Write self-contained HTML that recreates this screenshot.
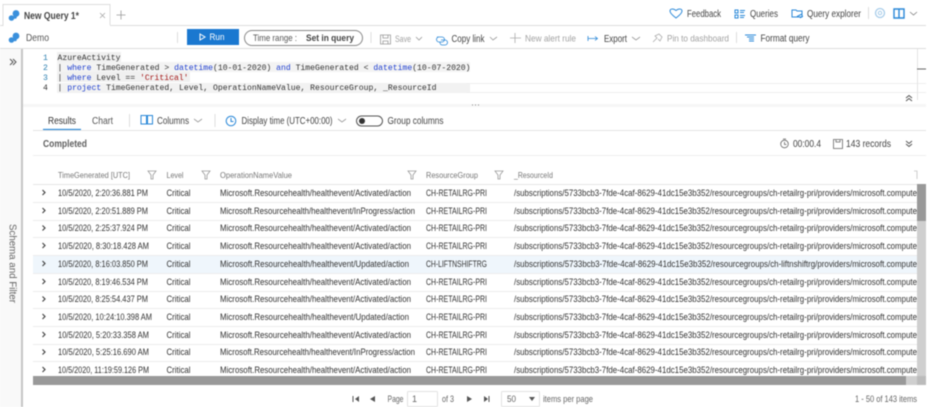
<!DOCTYPE html>
<html><head><meta charset="utf-8"><style>
html,body{margin:0;padding:0;background:#fff;overflow:hidden}
svg{display:block;filter:blur(.45px)}
text{font-family:"Liberation Sans",sans-serif;white-space:pre}
.m{font-family:"Liberation Mono",monospace;font-size:8.1px;fill:#333}
.b{fill:#1f3fd0}.n{fill:#2b7fb0}
.t{font-size:8.9px;fill:#333}
.h{font-size:8.6px;fill:#777}
.u{font-size:9.7px;fill:#444}
.g{font-size:9.400px;fill:#a2a2a2}
.i{fill:none;stroke:#2a88d8;stroke-width:1}
.f{fill:none;stroke:#999;stroke-width:.8}
.c{fill:none;stroke:#555;stroke-width:1}
</style></head><body>
<svg width="936" height="407" viewBox="0 0 936 407" xmlns="http://www.w3.org/2000/svg">
<rect width="936" height="407" fill="#fff"/>
<!-- top tab -->
<path d="M0 25.500H3V4.500H110V25.500H926" fill="none" stroke="#ddd"/>
<path d="M4 25.500H110" stroke="#fff" stroke-width="1"/>
<g fill="#3a90dc"><circle cx="11.500" cy="18" r="2.800"/><circle cx="16" cy="13.500" r="3.400"/><circle cx="15" cy="17" r="1.800"/></g>
<text x="24" y="19" font-size="10" font-weight="bold" fill="#444" textLength="55" lengthAdjust="spacingAndGlyphs">New Query 1*</text>
<path d="M100 13L105 18M105 13L100 18" stroke="#aaa" stroke-width=".8"/>
<path d="M121 10.500V19.500M116.500 15H125.500" stroke="#999" stroke-width=".8"/>
<!-- top right -->
<path d="M676 18C672 15 670 13 670 11C670 9 673 8 676 10.500C679 8 682 9 682 11C682 13 680 15 676 18Z" class="i"/>
<text x="687" y="17" class="u" textLength="34" lengthAdjust="spacingAndGlyphs">Feedback</text>
<path d="M735 10h3v3h-3zM735 15h3v3h-3z" class="i"/><path d="M740 10.500h5M740 12.500h4M740 15.500h5M740 17.500h4" stroke="#2a88d8"/>
<text x="750" y="17" class="u" textLength="28" lengthAdjust="spacingAndGlyphs">Queries</text>
<path d="M792 17V10H796L797 11H802V17H792Z" class="i"/><path d="M797 16.500L802 14M800 18L803 16" stroke="#2a88d8"/>
<text x="807" y="17" class="u" textLength="54" lengthAdjust="spacingAndGlyphs">Query explorer</text>
<path d="M868.500 7V19" stroke="#ddd"/>
<circle cx="880" cy="13" r="4.500" fill="none" stroke="#a8cdea" stroke-width="1.300"/><circle cx="880" cy="13" r="1.700" fill="none" stroke="#a8cdea"/>
<path d="M894 9H904V18H894ZM899 9V18" fill="none" stroke="#2a88d8" stroke-width="1.400"/>
<path d="M910 12L913.500 15L917 12" fill="none" stroke="#777" stroke-width=".7"/>
<!-- toolbar -->
<g fill="#3a90dc"><circle cx="11.500" cy="40" r="2.800"/><circle cx="16" cy="36" r="3.400"/><circle cx="15" cy="39.500" r="1.800"/></g>
<text x="26" y="41" font-size="9.800" fill="#555" textLength="23" lengthAdjust="spacingAndGlyphs">Demo</text>
<path d="M177.500 32V43" stroke="#ddd"/>
<rect x="187" y="29" width="52" height="16" fill="#1a78d0"/>
<path d="M200 34L205 37L200 40Z" fill="none" stroke="#fff"/>
<text x="209.500" y="40" font-size="9.500" fill="#fff" textLength="15" lengthAdjust="spacingAndGlyphs">Run</text>
<rect x="244.500" y="30.500" width="118" height="15" rx="7.500" fill="#fff" stroke="#888"/>
<text x="253" y="41" font-size="9.500" fill="#555" textLength="44" lengthAdjust="spacingAndGlyphs">Time range :</text>
<text x="306" y="41" font-size="9.500" font-weight="bold" fill="#444" textLength="48" lengthAdjust="spacingAndGlyphs">Set in query</text>
<path d="M371 32V43" stroke="#ddd"/>
<path d="M380.500 35H390.500V44H380.500ZM383 35V38H388V35M383 44V41H388V44" fill="none" stroke="#999" stroke-width=".8"/>
<text x="395" y="42" class="g" textLength="16" lengthAdjust="spacingAndGlyphs">Save</text>
<path d="M416 37L419 40L422 37" class="f"/>
<path d="M437 37h5a2.500 2.500 0 0 1 0 5h-3a2.500 2.500 0 0 1 0-5M441 40h4a2.500 2.500 0 0 1 0 5h-3a2.500 2.500 0 0 1-2-3" fill="none" stroke="#2a88d8" stroke-width=".8"/>
<text x="451.500" y="42" class="u" textLength="33" lengthAdjust="spacingAndGlyphs">Copy link</text>
<path d="M490 37L493 40L497 37" class="f"/>
<path d="M515 33V43M510 38H521" stroke="#aaa" stroke-width=".8"/>
<text x="525" y="41.500" class="g" textLength="51" lengthAdjust="spacingAndGlyphs">New alert rule</text>
<path d="M588 36V41M588 38.500H597M595 36.500L597.500 38.500L595 40.500" fill="none" stroke="#2a88d8" stroke-width=".8"/>
<text x="604" y="42" class="u" textLength="23" lengthAdjust="spacingAndGlyphs">Export</text>
<path d="M632 37L636 40L640 37" class="f"/>
<path d="M653 42L657 38L655 36L659 34L662 37L660 41L658 39" fill="none" stroke="#aaa" stroke-width=".8"/>
<text x="667" y="41.500" class="g" textLength="62" lengthAdjust="spacingAndGlyphs">Pin to dashboard</text>
<path d="M736.500 32V43" stroke="#ddd"/>
<path d="M745 35H756M747 37H754M749 39H754M749 41H754" stroke="#2a88d8" stroke-width="1"/>
<text x="760.500" y="41.500" class="u" textLength="49" lengthAdjust="spacingAndGlyphs">Format query</text>
<path d="M0 48.500H926" stroke="#ddd"/>
<!-- left sidebar -->
<rect x="0" y="49" width="21" height="358" fill="#f9f9f9"/>
<rect x="21" y="49" width="2" height="358" fill="#c6c6c6"/>
<path d="M10 59L13 62L10 65M13 59L16 62L13 65" fill="none" stroke="#555"/>
<text transform="translate(9.500,224) rotate(90)" font-size="10.500" fill="#666" textLength="79" lengthAdjust="spacingAndGlyphs">Schema and Filter</text>
<!-- editor -->
<rect x="57" y="52" width="64" height="10" fill="#f0f0f0"/>
<rect x="57" y="62" width="413" height="10" fill="#f3f3f3"/>
<rect x="57" y="72" width="133" height="10" fill="#f0f0f0"/>
<rect x="57" y="83" width="413" height="10" fill="#f2f2f2"/>
<path d="M466 83.500H926M466 92.500H926" stroke="#eee"/>
<path d="M917.500 49V100" stroke="#e4e4e4"/>
<path d="M917 69H926" stroke="#666"/>
<text class="m n" x="43" y="60">1</text><text class="m n" x="43" y="70">2</text><text class="m n" x="43" y="80">3</text><text class="m" x="43" y="90">4</text>
<text class="m" x="57.500" y="60" textLength="63">AzureActivity</text>
<text class="m" x="57.500" y="70" textLength="413" xml:space="preserve">| <tspan class="b">where</tspan> TimeGenerated &gt; <tspan class="b">datetime</tspan>(10-01-2020) <tspan class="b">and</tspan> TimeGenerated &lt; <tspan class="b">datetime</tspan>(10-07-2020)</text>
<text class="m" x="57.500" y="80" textLength="131" xml:space="preserve">| <tspan class="b">where</tspan> Level == <tspan fill="#a31515">'Critical'</tspan></text>
<text class="m" x="57.500" y="90" textLength="379" xml:space="preserve">| <tspan class="b">project</tspan> TimeGenerated, Level, OperationNameValue, ResourceGroup, _ResourceId</text>
<path d="M906 98L909 95.500L912 98M906 101L909 98.500L912 101" fill="none" stroke="#555"/>
<rect x="23" y="104" width="903" height="3" fill="#f6f6f6"/>
<path d="M472 105h1M475 105h1M478 105h1" stroke="#888"/>
<!-- results tabs -->
<text x="48" y="124" font-size="9.800" fill="#333" textLength="28" lengthAdjust="spacingAndGlyphs">Results</text>
<path d="M43 129.500H81" stroke="#2a88d8" stroke-width="1.300"/>
<text x="92" y="124" font-size="9.800" fill="#555" textLength="21" lengthAdjust="spacingAndGlyphs">Chart</text>
<path d="M129.500 114V127" stroke="#ddd"/>
<path d="M141 115.500H146.500V124H141ZM147.500 115.500H152.500V124H147.500Z" class="i"/>
<text x="157" y="124" class="u" textLength="32" lengthAdjust="spacingAndGlyphs">Columns</text>
<path d="M194 119L198 122L202 119" class="f"/>
<path d="M215 114V127" stroke="#ddd"/>
<circle cx="231" cy="121" r="4.800" class="i"/><path d="M231 118V121.500H233.500" class="i"/>
<text x="241.500" y="124" class="u" textLength="91" lengthAdjust="spacingAndGlyphs">Display time (UTC+00:00)</text>
<path d="M338 119L342 122L346 119" class="f"/>
<rect x="356.500" y="116" width="26" height="10" rx="5" fill="#fff" stroke="#555"/>
<circle cx="362" cy="121" r="3" fill="#333"/>
<text x="387.500" y="124" class="u" textLength="56" lengthAdjust="spacingAndGlyphs">Group columns</text>
<path d="M33 130.500H926" stroke="#e4e4e4"/>
<text x="43" y="147" font-size="10" fill="#444" font-weight="bold" textLength="44" lengthAdjust="spacingAndGlyphs" opacity=".85">Completed</text>
<circle cx="784.500" cy="144" r="3.800" fill="none" stroke="#666" stroke-width=".8"/><path d="M784.500 142V144.500H786.500M783 139H786" fill="none" stroke="#666" stroke-width=".8"/>
<text x="793" y="147" class="u" textLength="28" lengthAdjust="spacingAndGlyphs">00:00.4</text>
<path d="M833.500 139.500H842.500V148.500H833.500ZM836 140V142H840V140" fill="none" stroke="#666" stroke-width=".8"/>
<text x="846" y="147" class="u" textLength="45" lengthAdjust="spacingAndGlyphs">143 records</text>
<path d="M906 141L909 143.500L912 141M906 144L909 146.500L912 144" fill="none" stroke="#555"/>
<path d="M33 155.500H926" stroke="#eee"/>
<!-- header -->
<text x="58" y="178" class="h" textLength="72" lengthAdjust="spacingAndGlyphs">TimeGenerated [UTC]</text>
<text x="166.500" y="178" class="h" textLength="17" lengthAdjust="spacingAndGlyphs">Level</text>
<text x="220" y="178" class="h" textLength="72" lengthAdjust="spacingAndGlyphs">OperationNameValue</text>
<text x="426" y="178" class="h" textLength="52" lengthAdjust="spacingAndGlyphs">ResourceGroup</text>
<text x="514" y="178" class="h" textLength="39" lengthAdjust="spacingAndGlyphs">_ResourceId</text>
<path d="M148 171H156L153 175V179H151V175Z" class="f"/>
<path d="M202 171H210L207 175V179H205V175Z" class="f"/>
<path d="M408 171H416L413 175V179H411V175Z" class="f"/>
<path d="M495 171H503L500 175V179H498V175Z" class="f"/>
<path d="M914 171H917V179" class="f" opacity=".6"/>
<path d="M33 184.500H917" stroke="#e6e6e6"/>
<!-- selected row -->
<rect x="33" y="255" width="884" height="18" fill="#eff6fc"/>
<!-- row lines -->
<path d="M33 202.500H917M33 220.500H917M33 237.500H917M33 255.500H917M33 273.500H917M33 291.500H917M33 308.500H917M33 326.500H917M33 344.500H917M33 361.500H917" stroke="#ececec"/>
<!-- chevrons -->
<g fill="none" stroke="#444" stroke-width="1.200">
<path d="M42.500 190L45 192.500L42.500 195"/><path d="M42.500 208L45 210.500L42.500 213"/><path d="M42.500 225.500L45 228L42.500 230.500"/><path d="M42.500 243L45 245.500L42.500 248"/><path d="M42.500 261L45 263.500L42.500 266"/><path d="M42.500 279L45 281.500L42.500 284"/><path d="M42.500 296.500L45 299L42.500 301.500"/><path d="M42.500 314L45 316.500L42.500 319"/><path d="M42.500 332L45 334.500L42.500 337"/><path d="M42.500 349.500L45 352L42.500 354.500"/><path d="M42.500 367L45 369.500L42.500 372"/>
</g>
<!-- rows -->
<g>
<text class="t" x="58" y="196" textLength="90" lengthAdjust="spacingAndGlyphs">10/5/2020, 2:20:36.881 PM</text>
<text class="t" x="166.500" y="196" textLength="24" lengthAdjust="spacingAndGlyphs">Critical</text>
<text class="t" x="220" y="196" textLength="191" lengthAdjust="spacingAndGlyphs">Microsoft.Resourcehealth/healthevent/Activated/action</text>
<text class="t" x="426" y="196" textLength="61" lengthAdjust="spacingAndGlyphs">CH-RETAILRG-PRI</text>
<text class="t" x="514" y="196" textLength="403" lengthAdjust="spacingAndGlyphs">/subscriptions/5733bcb3-7fde-4caf-8629-41dc15e3b352/resourcegroups/ch-retailrg-pri/providers/microsoft.compute</text>

<text class="t" x="58" y="214" textLength="90" lengthAdjust="spacingAndGlyphs">10/5/2020, 2:20:51.889 PM</text>
<text class="t" x="166.500" y="214" textLength="24" lengthAdjust="spacingAndGlyphs">Critical</text>
<text class="t" x="220" y="214" textLength="195" lengthAdjust="spacingAndGlyphs">Microsoft.Resourcehealth/healthevent/InProgress/action</text>
<text class="t" x="426" y="214" textLength="61" lengthAdjust="spacingAndGlyphs">CH-RETAILRG-PRI</text>
<text class="t" x="514" y="214" textLength="403" lengthAdjust="spacingAndGlyphs">/subscriptions/5733bcb3-7fde-4caf-8629-41dc15e3b352/resourcegroups/ch-retailrg-pri/providers/microsoft.compute</text>

<text class="t" x="58" y="231" textLength="90" lengthAdjust="spacingAndGlyphs">10/5/2020, 2:25:37.924 PM</text>
<text class="t" x="166.500" y="231" textLength="24" lengthAdjust="spacingAndGlyphs">Critical</text>
<text class="t" x="220" y="231" textLength="191" lengthAdjust="spacingAndGlyphs">Microsoft.Resourcehealth/healthevent/Activated/action</text>
<text class="t" x="426" y="231" textLength="61" lengthAdjust="spacingAndGlyphs">CH-RETAILRG-PRI</text>
<text class="t" x="514" y="231" textLength="403" lengthAdjust="spacingAndGlyphs">/subscriptions/5733bcb3-7fde-4caf-8629-41dc15e3b352/resourcegroups/ch-retailrg-pri/providers/microsoft.compute</text>

<text class="t" x="58" y="249" textLength="91" lengthAdjust="spacingAndGlyphs">10/5/2020, 8:30:18.428 AM</text>
<text class="t" x="166.500" y="249" textLength="24" lengthAdjust="spacingAndGlyphs">Critical</text>
<text class="t" x="220" y="249" textLength="191" lengthAdjust="spacingAndGlyphs">Microsoft.Resourcehealth/healthevent/Activated/action</text>
<text class="t" x="426" y="249" textLength="61" lengthAdjust="spacingAndGlyphs">CH-RETAILRG-PRI</text>
<text class="t" x="514" y="249" textLength="403" lengthAdjust="spacingAndGlyphs">/subscriptions/5733bcb3-7fde-4caf-8629-41dc15e3b352/resourcegroups/ch-retailrg-pri/providers/microsoft.compute</text>

<text class="t" x="58" y="267" textLength="90" lengthAdjust="spacingAndGlyphs">10/5/2020, 8:16:03.850 PM</text>
<text class="t" x="166.500" y="267" textLength="24" lengthAdjust="spacingAndGlyphs">Critical</text>
<text class="t" x="220" y="267" textLength="189" lengthAdjust="spacingAndGlyphs">Microsoft.Resourcehealth/healthevent/Updated/action</text>
<text class="t" x="426" y="267" textLength="61" lengthAdjust="spacingAndGlyphs">CH-LIFTNSHIFTRG</text>
<text class="t" x="514" y="267" textLength="403" lengthAdjust="spacingAndGlyphs">/subscriptions/5733bcb3-7fde-4caf-8629-41dc15e3b352/resourcegroups/ch-liftnshiftrg/providers/microsoft.compute</text>

<text class="t" x="58" y="285" textLength="90" lengthAdjust="spacingAndGlyphs">10/5/2020, 8:19:46.534 PM</text>
<text class="t" x="166.500" y="285" textLength="24" lengthAdjust="spacingAndGlyphs">Critical</text>
<text class="t" x="220" y="285" textLength="191" lengthAdjust="spacingAndGlyphs">Microsoft.Resourcehealth/healthevent/Activated/action</text>
<text class="t" x="426" y="285" textLength="61" lengthAdjust="spacingAndGlyphs">CH-RETAILRG-PRI</text>
<text class="t" x="514" y="285" textLength="403" lengthAdjust="spacingAndGlyphs">/subscriptions/5733bcb3-7fde-4caf-8629-41dc15e3b352/resourcegroups/ch-retailrg-pri/providers/microsoft.compute</text>

<text class="t" x="58" y="302" textLength="90" lengthAdjust="spacingAndGlyphs">10/5/2020, 8:25:54.437 PM</text>
<text class="t" x="166.500" y="302" textLength="24" lengthAdjust="spacingAndGlyphs">Critical</text>
<text class="t" x="220" y="302" textLength="191" lengthAdjust="spacingAndGlyphs">Microsoft.Resourcehealth/healthevent/Activated/action</text>
<text class="t" x="426" y="302" textLength="61" lengthAdjust="spacingAndGlyphs">CH-RETAILRG-PRI</text>
<text class="t" x="514" y="302" textLength="403" lengthAdjust="spacingAndGlyphs">/subscriptions/5733bcb3-7fde-4caf-8629-41dc15e3b352/resourcegroups/ch-retailrg-pri/providers/microsoft.compute</text>

<text class="t" x="58" y="320" textLength="94" lengthAdjust="spacingAndGlyphs">10/5/2020, 10:24:10.398 AM</text>
<text class="t" x="166.500" y="320" textLength="24" lengthAdjust="spacingAndGlyphs">Critical</text>
<text class="t" x="220" y="320" textLength="189" lengthAdjust="spacingAndGlyphs">Microsoft.Resourcehealth/healthevent/Updated/action</text>
<text class="t" x="426" y="320" textLength="61" lengthAdjust="spacingAndGlyphs">CH-RETAILRG-PRI</text>
<text class="t" x="514" y="320" textLength="403" lengthAdjust="spacingAndGlyphs">/subscriptions/5733bcb3-7fde-4caf-8629-41dc15e3b352/resourcegroups/ch-retailrg-pri/providers/microsoft.compute</text>

<text class="t" x="58" y="338" textLength="91" lengthAdjust="spacingAndGlyphs">10/5/2020, 5:20:33.358 AM</text>
<text class="t" x="166.500" y="338" textLength="24" lengthAdjust="spacingAndGlyphs">Critical</text>
<text class="t" x="220" y="338" textLength="191" lengthAdjust="spacingAndGlyphs">Microsoft.Resourcehealth/healthevent/Activated/action</text>
<text class="t" x="426" y="338" textLength="61" lengthAdjust="spacingAndGlyphs">CH-RETAILRG-PRI</text>
<text class="t" x="514" y="338" textLength="403" lengthAdjust="spacingAndGlyphs">/subscriptions/5733bcb3-7fde-4caf-8629-41dc15e3b352/resourcegroups/ch-retailrg-pri/providers/microsoft.compute</text>

<text class="t" x="58" y="355" textLength="91" lengthAdjust="spacingAndGlyphs">10/5/2020, 5:25:16.690 AM</text>
<text class="t" x="166.500" y="355" textLength="24" lengthAdjust="spacingAndGlyphs">Critical</text>
<text class="t" x="220" y="355" textLength="195" lengthAdjust="spacingAndGlyphs">Microsoft.Resourcehealth/healthevent/InProgress/action</text>
<text class="t" x="426" y="355" textLength="61" lengthAdjust="spacingAndGlyphs">CH-RETAILRG-PRI</text>
<text class="t" x="514" y="355" textLength="403" lengthAdjust="spacingAndGlyphs">/subscriptions/5733bcb3-7fde-4caf-8629-41dc15e3b352/resourcegroups/ch-retailrg-pri/providers/microsoft.compute</text>

<text class="t" x="58" y="373" textLength="91" lengthAdjust="spacingAndGlyphs">10/5/2020, 11:19:59.126 PM</text>
<text class="t" x="166.500" y="373" textLength="24" lengthAdjust="spacingAndGlyphs">Critical</text>
<text class="t" x="220" y="373" textLength="191" lengthAdjust="spacingAndGlyphs">Microsoft.Resourcehealth/healthevent/Activated/action</text>
<text class="t" x="426" y="373" textLength="61" lengthAdjust="spacingAndGlyphs">CH-RETAILRG-PRI</text>
<text class="t" x="514" y="373" textLength="403" lengthAdjust="spacingAndGlyphs">/subscriptions/5733bcb3-7fde-4caf-8629-41dc15e3b352/resourcegroups/ch-retailrg-pri/providers/microsoft.compute</text>
</g>
<!-- scrollbars -->
<rect x="917" y="184" width="9" height="201" fill="#cfcfcf"/>
<rect x="917" y="184" width="9" height="37" fill="#999"/>
<rect x="33" y="376" width="893" height="9" fill="#cfcfcf"/>
<rect x="33" y="376" width="873" height="9" fill="#999"/>
<rect x="917" y="376" width="9" height="9" fill="#bbb"/>
<!-- pager -->
<g fill="#555">
<path d="M353 396V402" stroke="#555"/><path d="M359 396L355 399L359 402Z"/>
<path d="M375 396L370 399L375 402Z"/>
<path d="M467 396L472 399L467 402Z"/>
<path d="M484 396L488 399L484 402Z"/><path d="M489 396V402" stroke="#555"/>
</g>
<text x="387.500" y="402" font-size="9.200" fill="#666" textLength="16" lengthAdjust="spacingAndGlyphs">Page</text>
<rect x="407.500" y="391.500" width="30" height="15" rx="1" fill="#fff" stroke="#e2e2e2"/>
<text x="412" y="402" font-size="9" fill="#666">1</text>
<text x="442" y="402" font-size="9.200" fill="#666" textLength="12" lengthAdjust="spacingAndGlyphs">of 3</text>
<rect x="501.500" y="391.500" width="38" height="15" rx="1" fill="#fff" stroke="#e2e2e2"/>
<text x="507" y="402" font-size="9.200" fill="#666" textLength="9" lengthAdjust="spacingAndGlyphs">50</text>
<text x="543" y="402" font-size="9.200" fill="#666" textLength="50" lengthAdjust="spacingAndGlyphs">items per page</text>
<text x="855" y="402" font-size="9.200" fill="#666" textLength="62" lengthAdjust="spacingAndGlyphs">1 - 50 of 143 items</text>
<path d="M529 397H535L532 401Z" fill="#555"/>
</svg>
</body></html>
